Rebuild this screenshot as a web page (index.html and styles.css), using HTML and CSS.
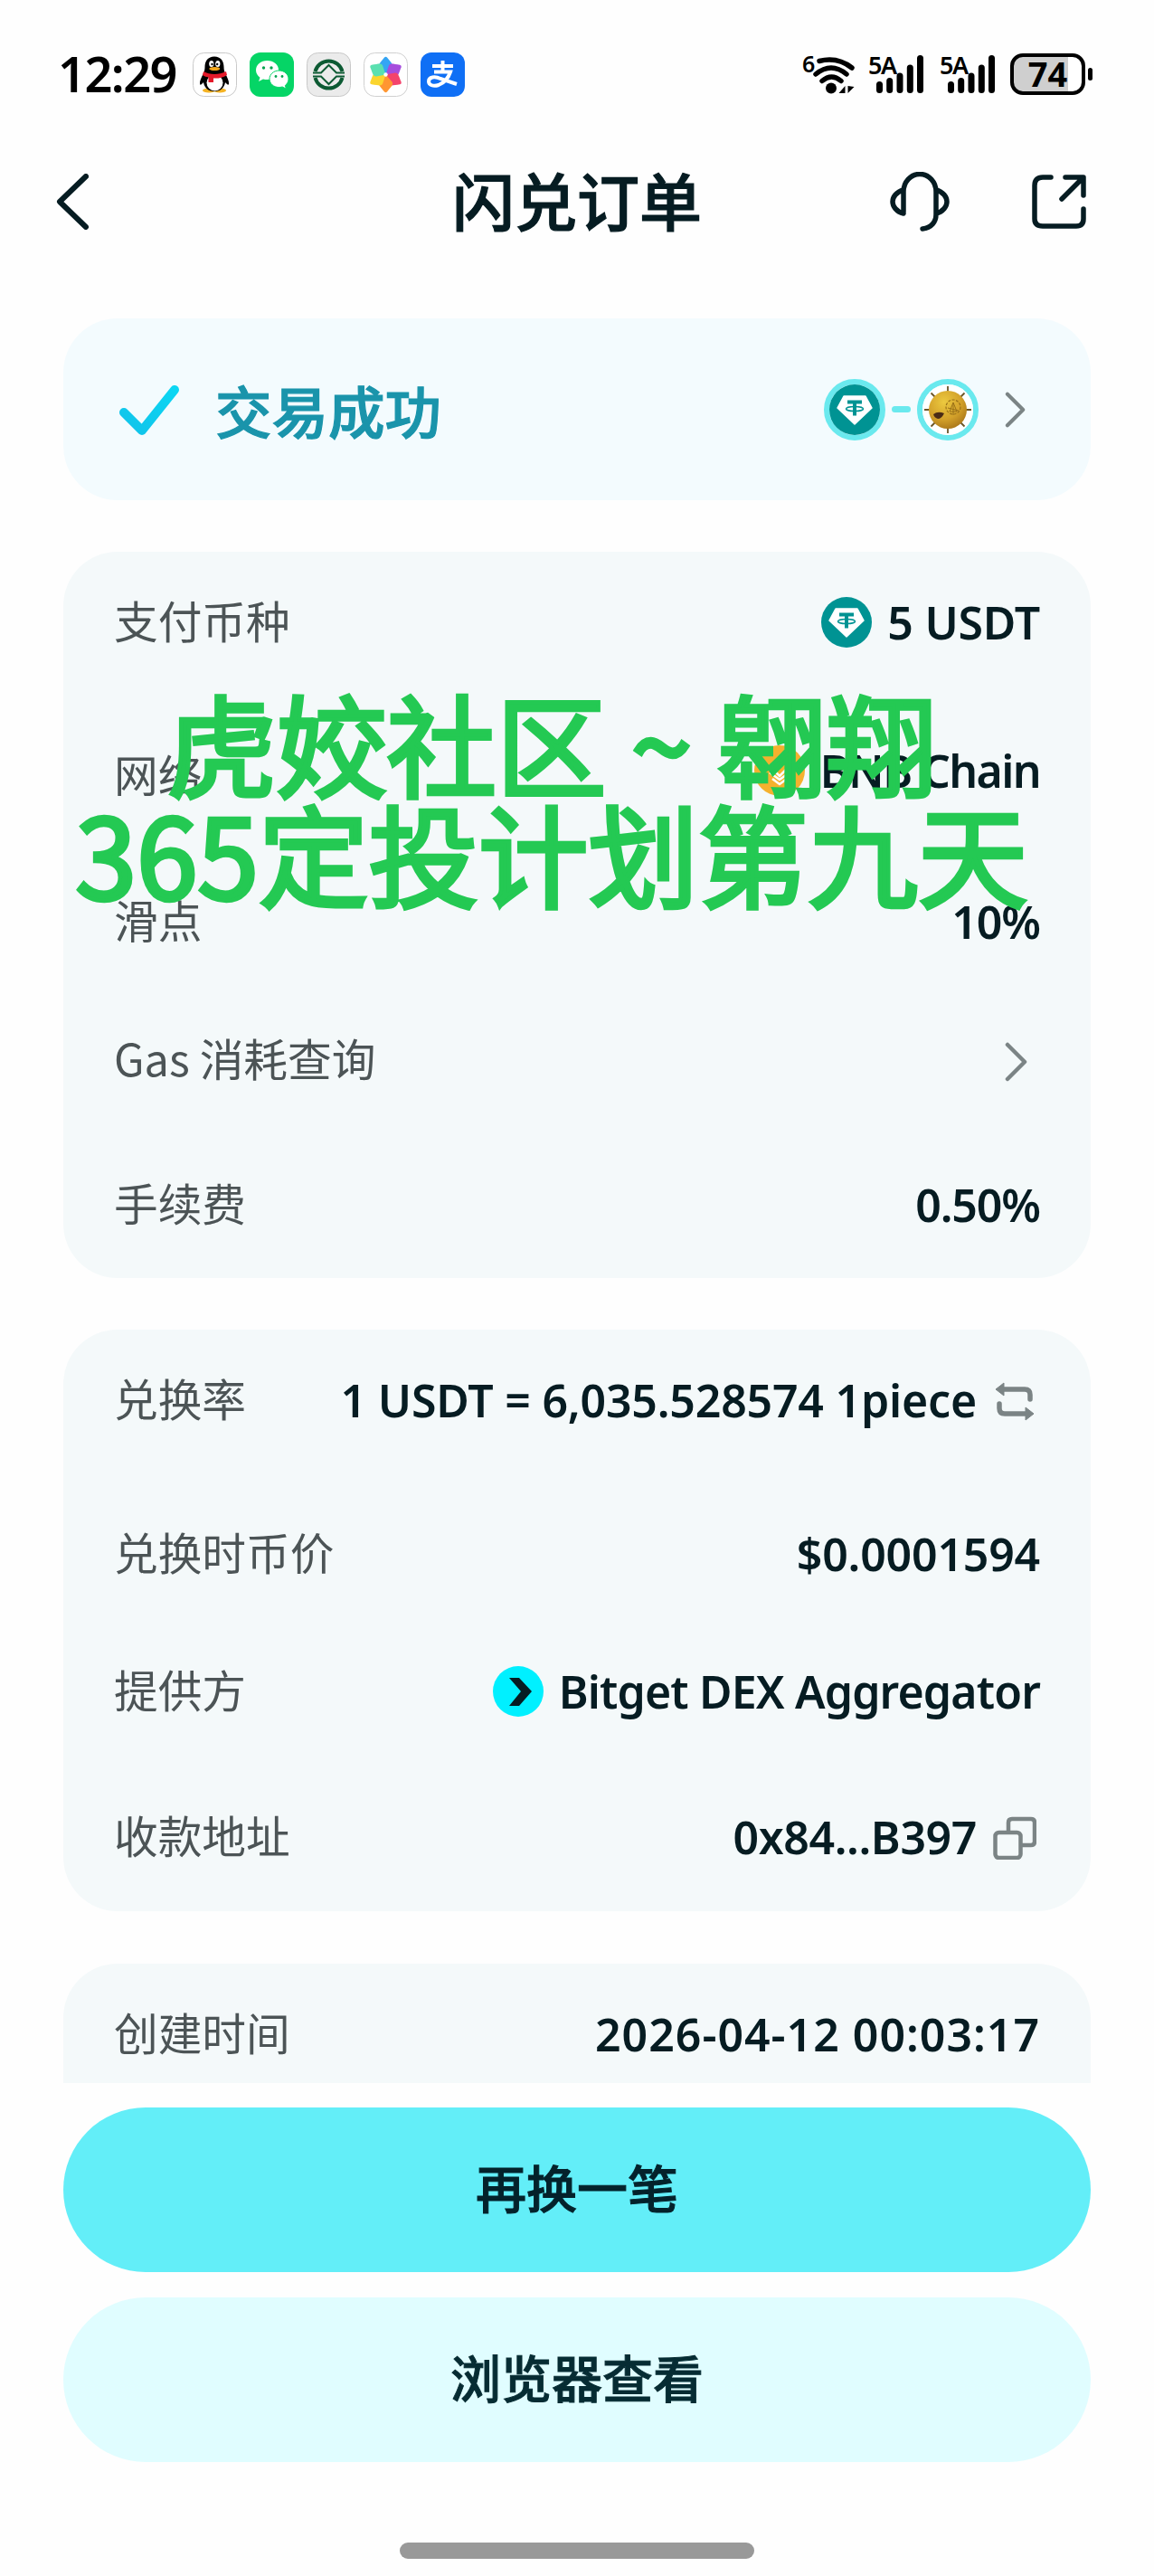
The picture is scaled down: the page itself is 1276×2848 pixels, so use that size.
FILE: index.html
```html
<!DOCTYPE html>
<html lang="zh-CN">

<head>
    <meta charset="UTF-8">
    <meta name="viewport" content="width=device-width, initial-scale=1.0">
    <title>闪兑订单</title>
    <link rel="stylesheet" href="styles.css">
</head>

<body>

    <!-- shared icons -->
    <svg width="0" height="0" class="defs">
        <symbol id="usdt" viewBox="0 0 56 56">
            <circle cx="28" cy="28" r="28" fill="#009393"/>
            <path d="M16 13h24l7 13-19 18L9 26z" fill="#fff" stroke="#fff" stroke-width="1.5" stroke-linejoin="round"/>
            <path d="M20 17.5h16v4h-6v13h-4v-13h-6z" fill="#009393"/>
            <ellipse cx="28" cy="27" rx="9.5" ry="2.6" fill="none" stroke="#009393" stroke-width="1.5"/>
        </symbol>
        <symbol id="signal" viewBox="0 0 62 42">
            <path d="M12.5 32.5v6M23.7 28.5v10M35 23v15.500M46.300 14v24.500M57.500 3.500v35" fill="none" stroke="#000" stroke-width="7" stroke-linecap="round"/>
        </symbol>
        <symbol id="arrow" viewBox="0 0 26 44">
            <path d="M3 3l19 19L3 41" fill="none" stroke="#7b8485" stroke-width="4.500" stroke-linecap="round" stroke-linejoin="round"/>
        </symbol>
    </svg>

    <div class="status">
        <span class="clock">12:29</span>
        <div class="apps">
            <svg class="app" viewBox="0 0 49 49">
                <rect x=".5" y=".5" width="48" height="48" rx="12" fill="#fff" stroke="#c9c9c9"/>
                <ellipse cx="18" cy="42" rx="7" ry="2.500" fill="#f5b324"/>
                <ellipse cx="30" cy="42" rx="7" ry="2.500" fill="#f5b324"/>
                <path d="M24 4.500c-7 0-10.500 5-10.500 11.500 0 3-.5 5-2 8-2 4-4 8-3.500 11 1 2 3-1 4-2 1 6 5 10 12 10s11-4 12-10c1 1 3 4 4 2 .5-3-1.500-7-3.500-11-1.500-3-2-5-2-8C34.500 9.500 31 4.500 24 4.500z" fill="#000"/>
                <ellipse cx="24.500" cy="33.500" rx="9" ry="9" fill="#fff"/>
                <ellipse cx="20.800" cy="12.500" rx="2.600" ry="3.500" fill="#fff"/>
                <ellipse cx="27.800" cy="12.500" rx="2.600" ry="3.500" fill="#fff"/>
                <circle cx="21.500" cy="13" r="1.200"/>
                <circle cx="27.200" cy="13" r="1.200"/>
                <ellipse cx="24.300" cy="18" rx="6" ry="2" fill="#f5a81c"/>
                <path d="M12 21c7 4 17 4 25 0l1 4c-5 3-10 4-15 3.500V33h-5.500v-5.500c-2-.5-4.500-1-6.500-2.500z" fill="#e5192a"/>
            </svg>
            <svg class="app" viewBox="0 0 49 49">
                <rect width="49" height="49" rx="12" fill="#05d566"/>
                <path d="M19.500 9C12.500 9 7 13.600 7 19.500c0 3.400 1.700 6.200 4.500 8.200L10 32l5-2.600c1.500.4 3 .6 4.500.6C26.500 30 32 25.400 32 19.500S26.500 9 19.500 9z" fill="#fff"/>
                <path d="M32.500 20C26.500 20 22 24.200 22 29.300s4.500 9.200 10.500 9.200c1.300 0 2.500-.2 3.700-.5l4.300 2.200-1.200-3.700c2.300-1.700 3.700-4.300 3.700-7.200C43 24.200 38.500 20 32.500 20z" fill="#fff" stroke="#05d566" stroke-width="1"/>
                <g fill="#07a350"><circle cx="15.500" cy="17" r="1.700"/><circle cx="24" cy="17" r="1.700"/><circle cx="29" cy="26.500" r="1.400"/><circle cx="36" cy="26.500" r="1.400"/></g>
            </svg>
            <svg class="app" viewBox="0 0 49 49">
                <rect x=".5" y=".5" width="48" height="48" rx="12" fill="#ebebeb" stroke="#c8c8c8"/>
                <g fill="none" stroke="#0c5a33" stroke-width="4">
                    <path d="M7 22.500h9l8.500-8.500 8.500 8.500h9" stroke-width="2"/>
                    <path d="M9.500 21A15.500 15.500 0 0 1 39.500 21"/>
                    <path d="M7 26.500h9l8.500 8.500 8.500-8.500h9" stroke-width="2"/>
                    <path d="M9.500 28A15.500 15.500 0 0 0 39.500 28"/>
                </g>
            </svg>
            <svg class="app" viewBox="0 0 49 49">
                <rect x=".5" y=".5" width="48" height="48" rx="12" fill="#fff" stroke="#d0d0d0"/>
                <g transform="translate(24.500 24.500)">
                    <path d="M0 0l-7-8c-2-3 1-5 5.500-11q1.500-1.500 3 0C6 -13 9-11 7-8z" fill="#35a5f4"/>
                    <path d="M0 0l-7-8c-2-3 1-5 5.500-11q1.500-1.500 3 0C6 -13 9-11 7-8z" fill="#a64ddd" transform="rotate(60)"/>
                    <path d="M0 0l-7-8c-2-3 1-5 5.500-11q1.500-1.500 3 0C6 -13 9-11 7-8z" fill="#f4436c" transform="rotate(120)"/>
                    <path d="M0 0l-7-8c-2-3 1-5 5.500-11q1.500-1.500 3 0C6 -13 9-11 7-8z" fill="#ff9631" transform="rotate(180)"/>
                    <path d="M0 0l-7-8c-2-3 1-5 5.500-11q1.500-1.500 3 0C6 -13 9-11 7-8z" fill="#fbd52e" transform="rotate(240)"/>
                    <path d="M0 0l-7-8c-2-3 1-5 5.500-11q1.500-1.500 3 0C6 -13 9-11 7-8z" fill="#5be0b0" transform="rotate(300)"/>
                    <circle r="2.200" fill="#fff"/>
                </g>
            </svg>
            <svg class="app" viewBox="0 0 49 49">
                <rect width="49" height="49" rx="12" fill="#0f6ff5"/>
                <path d="M13 15h23M24.500 9v12M15 21.500h18c-2 6-7 12-13 14.500-6 2-11 0-11-4 0-5 7-6 13-3l18 6" fill="none" stroke="#fff" stroke-width="4"/>
            </svg>
        </div>
        <div class="system">
            <svg class="wifi" viewBox="0 0 60 46">
                <text x="0" y="21" class="tiny">6</text>
                <path d="M19 8.500q20-5 36 7.500M15 23q17-14 34 0M22 30.500q10.500-9 21 0" fill="none" stroke="#000" stroke-width="5.500" stroke-linecap="round"/>
                <circle cx="32" cy="38.500" r="6"/>
                <path d="M47.500 36v8h-7zM50.500 36v8l7-7z"/>
            </svg>
            <div class="net"><span>5A</span><svg width="62" height="42"><use href="#signal"/></svg></div>
            <div class="net net2"><span>5A</span><svg width="62" height="42"><use href="#signal"/></svg></div>
            <div class="battery"><span>74</span></div>
            <i class="nub"></i>
        </div>
    </div>

    <header>
        <svg class="back" viewBox="0 0 36 62">
            <path d="M33 3L4 31l29 28" fill="none" stroke="#061c22" stroke-width="6" stroke-linecap="round" stroke-linejoin="round"/>
        </svg>
        <h1>闪兑订单</h1>
        <div class="actions">
            <svg width="66" height="66" viewBox="0 0 66 66" fill="none" stroke="#061c22" stroke-width="5.500" stroke-linecap="round" stroke-linejoin="round">
                <path d="M15 44V22a17.500 19 0 0 1 36 0v25c0 8-5 15-15 16M15 20C7 22 3 28 3 33s4 11 12 13M51 20c8 2 12 8 12 13s-4 11-12 13"/>
            </svg>
            <svg width="62" height="62" viewBox="0 0 62 62" fill="none" stroke="#061c22" stroke-width="5.500" stroke-linecap="round" stroke-linejoin="round">
                <path d="M22 4h-9q-9 0-9 9v37q0 8 9 8h37q8 0 8-8V39M38 4h20v20M57 5L34 28"/>
            </svg>
        </div>
    </header>

    <main>
        <section class="card result">
            <svg class="check" viewBox="0 0 68 56">
                <defs>
                    <linearGradient id="tick" x1="0" y1="1" x2="1" y2="0">
                        <stop offset="0" stop-color="#11c3ea"/>
                        <stop offset="1" stop-color="#0cd6f3"/>
                    </linearGradient>
                </defs>
                <path d="M6 31l20 20L62 6" fill="none" stroke="url(#tick)" stroke-width="10" stroke-linecap="round" stroke-linejoin="round"/>
            </svg>
            <h2>交易成功</h2>
            <div class="pair">
                <span class="coin"><svg width="56" height="56"><use href="#usdt"/></svg></span>
                <i class="dash"></i>
                <span class="coin">
                    <svg width="56" height="56" viewBox="0 0 56 56">
                        <defs>
                            <radialGradient id="gold" cx=".4" cy=".3" r=".75">
                                <stop offset="0" stop-color="#ecc93f"/>
                                <stop offset=".6" stop-color="#d3a12a"/>
                                <stop offset="1" stop-color="#a87519"/>
                            </radialGradient>
                        </defs>
                        <circle cx="28" cy="28" r="28" fill="#fff"/>
                        <path d="M28 2v52M2 28h52M9.500 9.500l37 37M46.500 9.500l-37 37" stroke="#6b5527" stroke-width="1.800"/>
                        <circle cx="28" cy="28" r="21" fill="url(#gold)"/>
                        <circle cx="34" cy="25" r="8" fill="none" stroke="#9a7118" stroke-width="1.200" stroke-dasharray="3 1.500"/>
                        <path d="M30 30l4-10 4 10zM34 20v14M28 26l12 3" fill="none" stroke="#9a7118"/>
                        <path d="M12 33q5-4 12-1-3 6-7 6-4-1-5-5z" fill="#4a2b16"/>
                    </svg>
                </span>
                <svg class="go" width="26" height="40"><use href="#arrow"/></svg>
            </div>
        </section>

        <section class="card pay">
            <div class="row">
                <label>支付币种</label>
                <div class="value"><svg width="56" height="56"><use href="#usdt"/></svg><span>5 USDT</span></div>
            </div>
            <div class="row">
                <label class="low">网络</label>
                <div class="value">
                    <svg width="56" height="56" viewBox="0 0 56 56">
                        <circle cx="28" cy="28" r="28" fill="#f5b12e"/>
                        <path d="M20 26l8 8 8-8M17 30l11 8 11-8M20 37l8 6 8-6" fill="none" stroke="#fff" stroke-width="2.500"/>
                        <path d="M28 11l5 5-5 5-5-5z" fill="#fff"/>
                    </svg>
                    <span class="chain">BNB Chain</span>
                </div>
            </div>
            <div class="row">
                <label>滑点</label>
                <div class="value"><span class="percent">10%</span></div>
            </div>
            <div class="row">
                <label>Gas 消耗查询</label>
                <svg class="go" width="26" height="44"><use href="#arrow"/></svg>
            </div>
            <div class="row">
                <label>手续费</label>
                <div class="value"><span class="percent">0.50%</span></div>
            </div>
        </section>

        <section class="card rate">
            <div class="row">
                <label>兑换率</label>
                <div class="value">
                    <span class="price">1 USDT = 6,035.528574 1piece</span>
                    <svg class="tool" width="48" height="48" viewBox="0 0 48 48">
                        <path d="M10 11h25q6 0 6 6v5M38 38H13q-6 0-6-6v-5" fill="none" stroke="#7b8485" stroke-width="5.500" stroke-linecap="round"/>
                        <path d="M3 11l9-7v14zM45 38l-9 7V31z" fill="#7b8485" stroke="#7b8485" stroke-linejoin="round"/>
                    </svg>
                </div>
            </div>
            <div class="row">
                <label>兑换时币价</label>
                <div class="value"><span>$0.0001594</span></div>
            </div>
            <div class="row">
                <label>提供方</label>
                <div class="value">
                    <svg width="56" height="56" viewBox="0 0 56 56">
                        <circle cx="28" cy="28" r="28" fill="#00f0ff"/>
                        <path d="M18 13h11l14 15-14 16H18l13-16z" fill="#061c22"/>
                    </svg>
                    <span class="dex">Bitget DEX Aggregator</span>
                </div>
            </div>
            <div class="row">
                <label>收款地址</label>
                <div class="value">
                    <span class="address">0x84...B397</span>
                    <svg class="tool" width="48" height="48" viewBox="0 0 48 48" fill="none" stroke="#7b8485" stroke-width="4.500">
                        <rect x="2.500" y="18" width="28" height="28" rx="4"/>
                        <path d="M17 17V7q0-4 4-4h21q4 0 4 4v21q0 4-4 4H31"/>
                    </svg>
                </div>
            </div>
        </section>

        <section class="card time">
            <div class="row">
                <label>创建时间</label>
                <div class="value"><span class="date">2026-04-12 00:03:17</span></div>
            </div>
        </section>
    </main>

    <footer>
        <button type="button" class="primary">再换一笔</button>
        <button type="button" class="secondary">浏览器查看</button>
        <i class="home"></i>
    </footer>

    <div class="caption">虎姣社区 ~ 翱翔<br>365定投计划第九天</div>

</body>

</html>
```
FILE: styles.css
```css
* {
    box-sizing: border-box;
}

body {
    position: relative;
    width: 1276px;
    height: 2848px;
    margin: 0;
    overflow: hidden;
    background-color: #fefefe;
    color: #061c22;
    font-family: "Noto Sans", "Noto Sans CJK SC", sans-serif;
}

svg {
    display: block;
    flex: none;
}

.defs {
    position: absolute;
}

/* status bar */
.status {
    display: flex;
    align-items: center;
    height: 164px;
    padding: 0 68px 0 64px;
}

.clock {
    width: 149px;
    color: #000;
    font-size: 54px;
    font-weight: 600;
    line-height: 60px;
    letter-spacing: -1.5px;
    padding-bottom: 3px;
}

.apps {
    display: flex;
    gap: 14px;
}

.app {
    width: 49px;
    height: 49px;
}

.system {
    display: flex;
    align-items: center;
    margin-left: auto;
    color: #000;
}

.wifi {
    width: 60px;
    height: 46px;
    overflow: visible;
}

.tiny {
    font-size: 25px;
    font-weight: 600;
}

.net {
    position: relative;
    width: 62px;
    margin-left: 13px;
}

.net2 {
    margin-left: 17px;
}

.net span {
    position: absolute;
    left: 0;
    top: -2px;
    font-size: 27px;
    font-weight: 600;
    line-height: 26px;
    letter-spacing: -1.5px;
}

.battery {
    width: 83px;
    height: 46px;
    margin-left: 16px;
    border: 4px solid #000;
    border-radius: 14px;
    background: linear-gradient(90deg, #cfcfcf 60px, #fff 60px);
    font-size: 38px;
    font-weight: 700;
    line-height: 37px;
    text-align: center;
}

.nub {
    width: 5px;
    height: 14px;
    margin-left: 3px;
    border-radius: 3px;
    background-color: #000;
}

/* title bar */
header {
    display: flex;
    align-items: center;
    justify-content: space-between;
    height: 120px;
    padding: 0 74px 2px 62px;
}

.back {
    width: 36px;
    height: 62px;
    margin-right: 194px;
}

h1 {
    margin: 0;
    padding-bottom: 7px;
    font-family: "Noto Sans CJK SC", sans-serif;
    font-size: 69px;
    font-weight: 500;
    line-height: 80px;
    -webkit-text-stroke: 1.2px;
}

.actions {
    display: flex;
    align-items: center;
    gap: 90px;
}

/* order details */
main {
    height: 2019px;
    padding: 68px 70px 0;
    overflow: hidden;
}

.card {
    border-radius: 60px;
    background-color: #f4f9fa;
    padding: 48px 56px 0 56px;
}

.result {
    display: flex;
    align-items: center;
    height: 201px;
    padding: 0 70px 0 61px;
    background-color: #f3fbfe;
}

.check {
    width: 68px;
    height: 56px;
}

h2 {
    margin: 0 0 0 39px;
    color: #1a94ab;
    font-family: "Noto Sans CJK SC", sans-serif;
    font-size: 62.5px;
    font-weight: 500;
    line-height: 80px;
    -webkit-text-stroke: 1.2px;
}

.pair {
    display: flex;
    align-items: center;
    margin-left: auto;
}

.coin {
    border: 6px solid #6ae9ee;
    border-radius: 50%;
}

.dash {
    width: 21px;
    height: 7px;
    margin: 0 7px;
    border-radius: 4px;
    background-color: #6ae9ee;
}

.pair .go {
    margin-left: 28px;
}

.pay {
    height: 803px;
    margin-top: 57px;
}

.rate {
    height: 643px;
    margin-top: 57px;
}

.time {
    height: 240px;
    margin-top: 58px;
}

.row {
    display: flex;
    align-items: center;
    justify-content: space-between;
    height: 60px;
}

.pay .row:nth-child(2) {
    margin-top: 104px;
}

.pay .row:nth-child(3) {
    margin-top: 107px;
}

.pay .row:nth-child(4) {
    margin-top: 93px;
}

.pay .row:nth-child(5) {
    margin-top: 100px;
}

.rate .row:nth-child(2) {
    margin-top: 110px;
}

.rate .row:nth-child(3) {
    margin-top: 92px;
}

.rate .row:nth-child(4) {
    margin-top: 101px;
}

.row > .go {
    margin: 3px 13px 0 0;
}

label {
    padding-bottom: 6px;
    color: #4c5456;
    font-family: "Noto Sans CJK SC", sans-serif;
    font-size: 48.7px;
    line-height: 60px;
}

.low {
    padding: 6px 0 0;
}

.value {
    display: flex;
    align-items: center;
    font-size: 50px;
    font-weight: 600;
    line-height: 60px;
    letter-spacing: -.2px;
    white-space: nowrap;
}

.value > svg:first-child {
    margin-right: 17px;
}

.value .tool {
    margin: 2px 4px 0 18px;
}

.chain {
    letter-spacing: -1.6px;
}

.percent {
    letter-spacing: -1.1px;
}

.dex {
    letter-spacing: -.85px;
}

.address {
    letter-spacing: -.4px;
}

.date {
    letter-spacing: 1px;
}

/* bottom buttons */
footer {
    display: flex;
    flex-direction: column;
    align-items: center;
    padding: 27px 70px 0;
}

button {
    width: 100%;
    height: 182px;
    padding: 0 0 9px;
    border: none;
    border-radius: 91px;
    color: #04222b;
    font-family: "Noto Sans CJK SC", sans-serif;
    font-size: 56px;
    font-weight: 500;
    -webkit-text-stroke: 1px;
}

.primary {
    background-color: #63eef8;
}

.secondary {
    margin-top: 28px;
    background-color: #e0fdff;
    color: #062c33;
}

.home {
    width: 392px;
    height: 18px;
    margin-top: 89px;
    border-radius: 9px;
    background-color: #999;
}

/* text written over the screen */
.caption {
    position: absolute;
    left: 0;
    top: 758px;
    width: 1220px;
    color: #24c953;
    font-family: "Noto Sans CJK SC", sans-serif;
    font-size: 121.5px;
    font-weight: 400;
    line-height: 122px;
    text-align: center;
    white-space: nowrap;
    -webkit-text-stroke: 4.5px;
}
```
